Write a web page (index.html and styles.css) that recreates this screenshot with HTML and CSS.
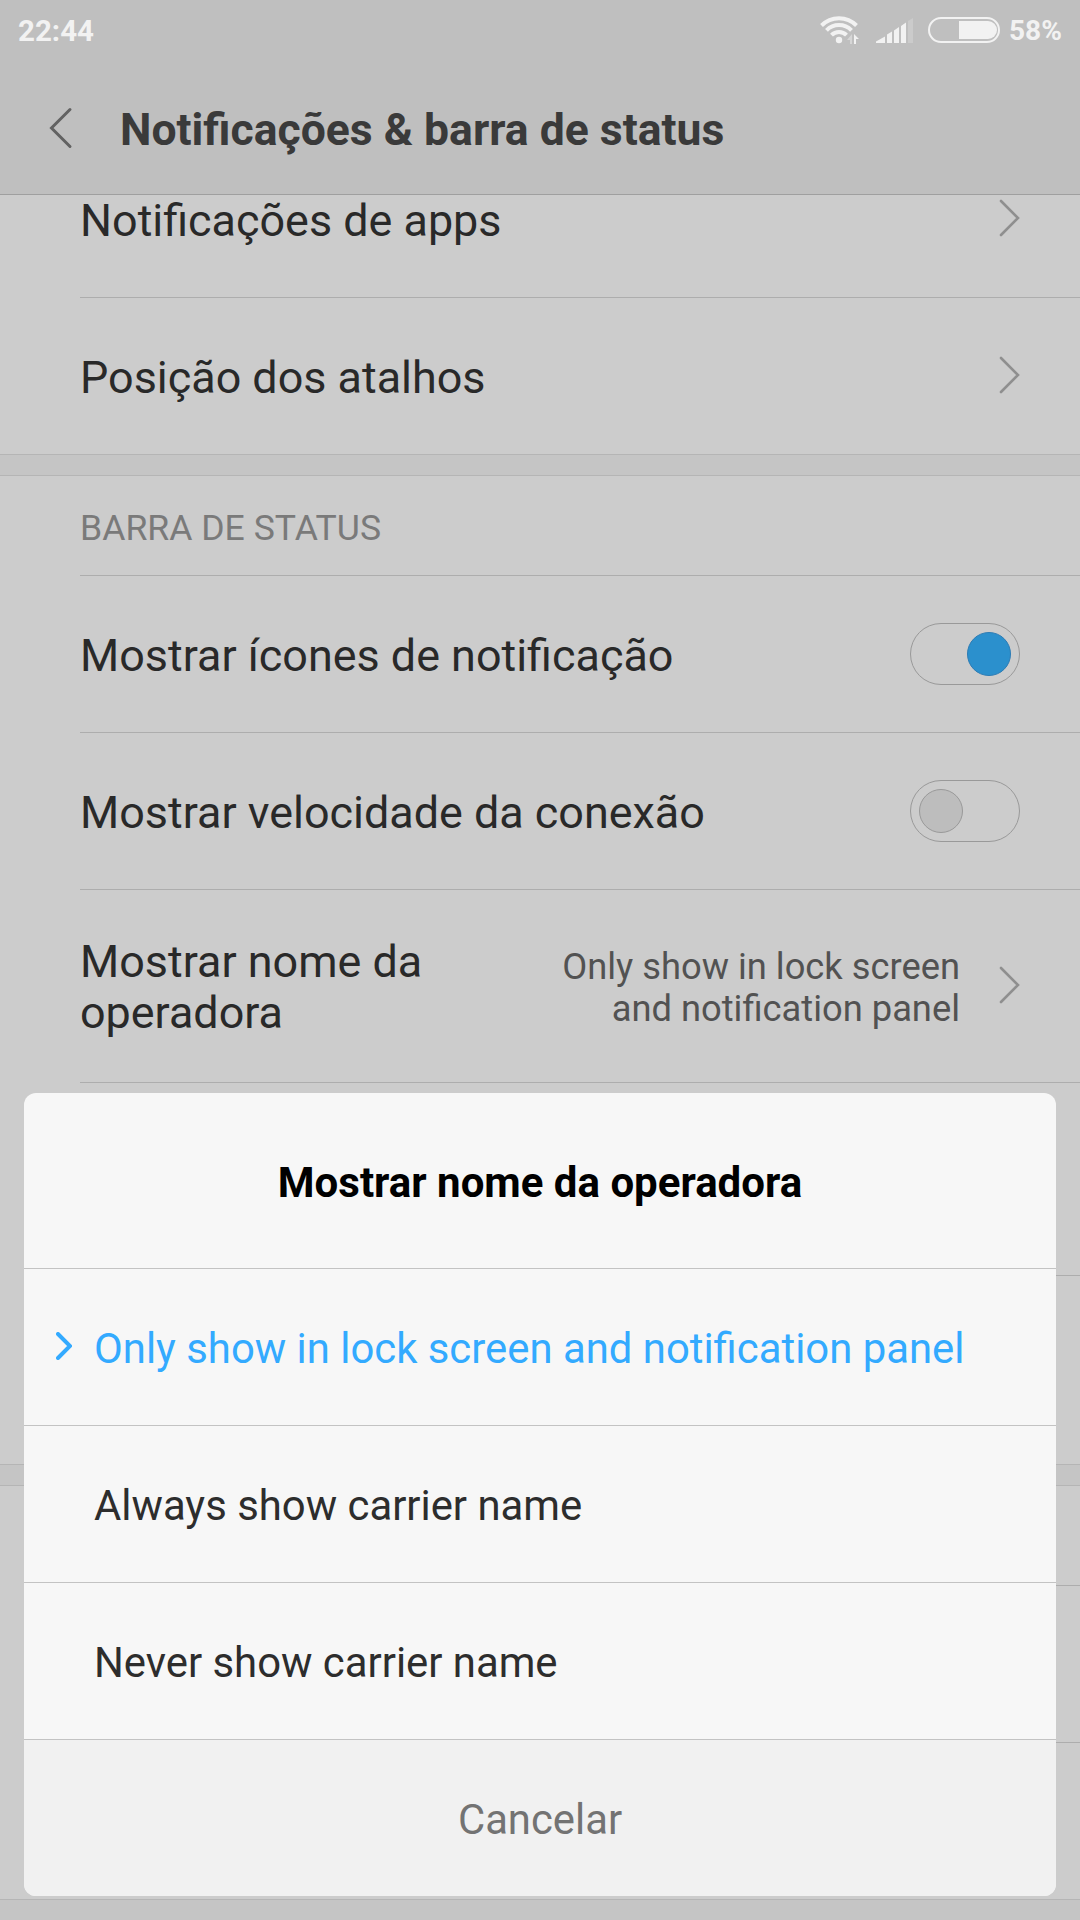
FILE: index.html
```html
<!DOCTYPE html>
<html lang="pt-BR">
<head>
  <meta charset="UTF-8" />
  <meta name="viewport" content="width=device-width, initial-scale=1.0"/>
  <title>Notificações &amp; barra de status</title>
  <link rel="stylesheet" href="styles.css">
</head>
<body>

  <div class="screen">
    <div class="status-bar">
      <span class="time">22:44</span>
      <div class="status-icons">
        <svg class="wifi" width="40" height="30" viewBox="0 0 40 30">
          <g fill="none" stroke="#f2f2f2" stroke-width="4">
            <path d="M1.500 10.500a24.500 24.500 0 0 1 35 0"/>
            <path d="M6.500 15.300a17.500 17.500 0 0 1 25 0"/>
            <path d="M11.500 20.200a10.500 10.500 0 0 1 15 0"/>
          </g>
          <circle cx="19" cy="25" r="3.2" fill="#f2f2f2"/>
          <path d="M32 19v10h-2v-4h-3l5-6z" fill="#d6d6d6"/>
          <path d="M34 29V19l5 5h-3v5z" fill="#f2f2f2"/>
        </svg>
        <svg class="signal" width="38" height="26" viewBox="0 0 38 26">
          <path d="M0 25v-1.500l9-5V25zM11 25V16.500l5-3V25zM18 25V12.500l5-3.500V25zM25 25V8l5-3.500V25z" fill="#f2f2f2"/>
          <path d="M32 25V3l5-3v25z" fill="#cbcbcb"/>
        </svg>
        <div class="battery"><div class="battery-level"></div></div>
        <span class="percent">58%</span>
      </div>
    </div>

    <div class="header">
      <svg class="back" width="24" height="42" viewBox="0 0 24 42">
        <path d="M21 2.500L2.500 21 21 39.500" fill="none" stroke="#626262" stroke-width="3" stroke-linecap="round"/>
      </svg>
      <h1>Notificações &amp; barra de status</h1>
    </div>

    <div class="settings">
      <div class="section scrolled">
        <div class="row">
          <span class="label">Notificações de apps</span>
          <svg class="chevron" width="21" height="38" viewBox="0 0 21 38"><path d="M2 2l17 17L2 36"/></svg>
        </div>
        <div class="row">
          <span class="label">Posição dos atalhos</span>
          <svg class="chevron" width="21" height="38" viewBox="0 0 21 38"><path d="M2 2l17 17L2 36"/></svg>
        </div>
      </div>

      <div class="section">
        <h2>BARRA DE STATUS</h2>
        <div class="row">
          <span class="label">Mostrar ícones de notificação</span>
          <div class="toggle on"><div class="knob"></div></div>
        </div>
        <div class="row">
          <span class="label">Mostrar velocidade da conexão</span>
          <div class="toggle"><div class="knob"></div></div>
        </div>
        <div class="row tall">
          <span class="label">Mostrar nome da<br>operadora</span>
          <span class="value">Only show in lock screen<br>and notification panel</span>
          <svg class="chevron" width="21" height="38" viewBox="0 0 21 38"><path d="M2 2l17 17L2 36"/></svg>
        </div>
        <div class="row tall"></div>
        <div class="row last"></div>
      </div>

      <div class="section">
        <div class="row short"></div>
        <div class="row"></div>
        <div class="row"></div>
      </div>
    </div>

    <div class="dialog">
      <div class="dialog-title">Mostrar nome da operadora</div>
      <div class="option selected">
        <svg class="mark" width="16" height="28" viewBox="0 0 16 28"><path d="M2 2l12 12L2 26"/></svg>
        <span>Only show in lock screen and notification panel</span>
      </div>
      <div class="option"><span>Always show carrier name</span></div>
      <div class="option"><span>Never show carrier name</span></div>
      <div class="cancel">Cancelar</div>
    </div>
  </div>

</body>
</html>
```
FILE: styles.css
```css
:root {
  --bar: #bfbfbf;
  --page: #cccccc;
  --gap: #c5c5c5;
  --line: #adadad;
  --text: #292929;
  --accent: #33aaff;
}

* {
  box-sizing: border-box;
  margin: 0;
  padding: 0;
}

body {
  font-family: Roboto, sans-serif;
  background-color: var(--gap);
}

.screen {
  position: relative;
  width: 1080px;
  height: 1920px;
  overflow: hidden;
}

.status-bar {
  display: flex;
  justify-content: space-between;
  height: 60px;
  padding: 0 18px;
  background-color: var(--bar);
  color: #f2f2f2;
  font-size: 29.5px;
  font-weight: bold;
  line-height: 62px;
}

.status-icons {
  display: flex;
}

.wifi {
  margin: 15px 16px 0 0;
}

.signal {
  margin: 18px 14px 0 0;
}

.battery {
  width: 72px;
  height: 26px;
  margin: 17px 9px 0 0;
  padding: 2px 1px;
  border: 2px solid #f2f2f2;
  border-radius: 13px;
}

.battery-level {
  width: 38px;
  height: 18px;
  margin-left: auto;
  border-radius: 0 9px 9px 0;
  background-color: #f2f2f2;
}

.percent {
  width: 53px;
  font-size: 28px;
  white-space: nowrap;
}

.header {
  display: flex;
  align-items: center;
  height: 135px;
  padding: 1px 48px 0 49px;
  background-color: var(--bar);
  border-bottom: 1px solid #9f9f9f;
}

h1 {
  margin-left: 47px;
  padding-top: 6px;
  color: #3a3a3a;
  font-size: 44.5px;
  line-height: 53px;
}

.settings {
  overflow: hidden;
}

.section {
  margin-bottom: 20px;
  padding-left: 80px;
  background-color: var(--page);
  border-top: 1px solid #b5b5b5;
  border-bottom: 1px solid #b5b5b5;
}

/* first row sits partly under the header */
.scrolled {
  margin-top: -54px;
  border-top: none;
}

h2 {
  height: 100px;
  padding-top: 5px;
  border-bottom: 1px solid var(--line);
  color: #7a7a7a;
  font-size: 35.6px;
  font-weight: normal;
  line-height: 94px;
}

.row {
  display: flex;
  align-items: center;
  height: 157px;
  padding-right: 60px;
  border-bottom: 1px solid var(--line);
}

.row:last-child {
  height: 156px;
  border-bottom: none;
}

.row.tall {
  height: 193px;
}

.row.last {
  height: 188px;
}

.row.short {
  height: 100px;
}

.label {
  flex: 1;
  padding-top: 2px;
  color: var(--text);
  font-size: 44.9px;
  line-height: 51px;
}

.value {
  padding-top: 3px;
  color: #525252;
  font-size: 36.3px;
  line-height: 42px;
  text-align: right;
}

.chevron {
  margin: 0 0 2px 39px;
  fill: none;
  stroke: #8f8f8f;
  stroke-width: 2.6;
  stroke-linecap: round;
}

.toggle {
  display: flex;
  align-items: center;
  width: 110px;
  height: 62px;
  padding: 0 8px;
  border: 1px solid #999999;
  border-radius: 31px;
}

.toggle.on {
  justify-content: flex-end;
}

.knob {
  width: 44px;
  height: 44px;
  border: 1px solid #999999;
  border-radius: 50%;
  background-color: #bdbdbd;
}

.on .knob {
  border-color: #2c7cb5;
  background-color: #2b90cd;
}

.dialog {
  position: absolute;
  left: 24px;
  right: 24px;
  bottom: 24px;
  overflow: hidden;
  border-radius: 12px;
  background-color: #f7f7f7;
}

.dialog-title {
  height: 176px;
  padding-top: 4px;
  border-bottom: 1px solid #c3c3c3;
  color: #000;
  font-size: 42px;
  font-weight: bold;
  line-height: 172px;
  text-align: center;
}

.option {
  display: flex;
  align-items: center;
  height: 157px;
  padding-left: 70px;
  border-bottom: 1px solid #c3c3c3;
  color: #2d2d2d;
  font-size: 41.85px;
}

.option span {
  padding-top: 3px;
}

.option.selected {
  padding-left: 32px;
  color: var(--accent);
}

.mark {
  margin: 0 22px 2px 0;
  fill: none;
  stroke: var(--accent);
  stroke-width: 4;
  stroke-linecap: round;
}

.cancel {
  height: 156px;
  padding-top: 3px;
  background-color: #f1f1f1;
  color: #737373;
  font-size: 41.8px;
  line-height: 153px;
  text-align: center;
}
```
